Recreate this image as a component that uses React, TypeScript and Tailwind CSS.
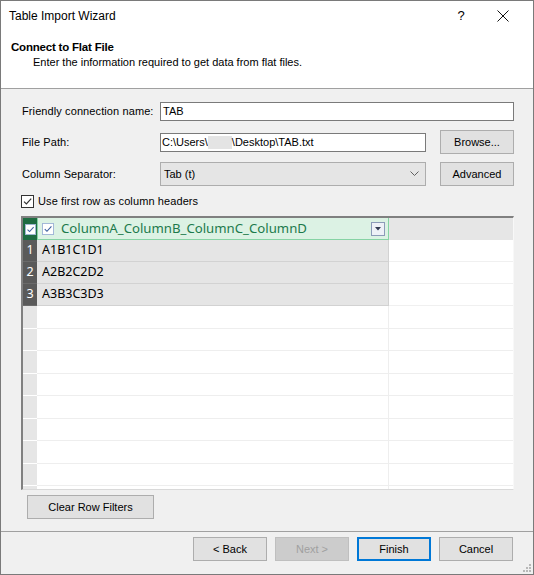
import React from 'react';

const ui = { fontFamily: '"Liberation Sans", Arial, sans-serif' };
const grid = { fontFamily: '"Noto Sans", "Open Sans", sans-serif' };

function Btn({ label, w = 'w-[74px]', disabled = false, focused = false }: { label: string; w?: string; disabled?: boolean; focused?: boolean }) {
  let cls = 'border-[#adadad] bg-[#e1e1e1] text-black';
  if (disabled) cls = 'border-[#bfbfbf] bg-[#cccccc] text-[#a0a0a0]';
  if (focused) cls = 'border-2 border-[#0078d7] bg-[#e1e1e1] text-black';
  return (
    <div className={`${w} h-[24px] border flex items-center justify-center text-[11px] ${cls}`}>
      {label}
    </div>
  );
}

function Check({ size = 13, tone = 'dark' }: { size?: number; tone?: 'dark' | 'blue' }) {
  const stroke = tone === 'dark' ? '#333333' : '#3c5f9e';
  const border = tone === 'dark' ? '#333333' : '#9eb4d6';
  return (
    <svg width={size} height={size} viewBox="0 0 13 13">
      <rect x="0.5" y="0.5" width="12" height="12" fill="#ffffff" stroke={border} />
      <path d="M3 6.6 L5.4 9 L10.2 3.6" fill="none" stroke={stroke} strokeWidth="1.2" />
    </svg>
  );
}

const dataRows = ['A1B1C1D1', 'A2B2C2D2', 'A3B3C3D3'];

export default function App() {
  return (
    <div style={ui} className="w-[534px] h-[575px] border border-[#7a7a7a] flex flex-col bg-[#f0f0f0] text-black overflow-hidden">
      {/* title + header */}
      <div className="bg-white h-[87px] flex flex-col">
        <div className="h-[30px] flex items-center pl-[8px]">
          <span className="text-[12px] flex-1">Table Import Wizard</span>
          <span className="text-[13px] w-[20px] text-center mr-[26px]">?</span>
          <svg width="12" height="12" viewBox="0 0 12 12" className="mr-[24px]">
            <path d="M0.5 0.5 L11.5 11.5 M11.5 0.5 L0.5 11.5" stroke="#111" strokeWidth="1" />
          </svg>
        </div>
        <div className="pl-[10px] pt-[9px] text-[11.5px] font-bold tracking-[-0.2px] leading-[14px]">Connect to Flat File</div>
        <div className="pl-[32px] text-[11px] leading-[16px]">Enter the information required to get data from flat files.</div>
      </div>
      <div className="h-px bg-[#a0a0a0]" />

      {/* body */}
      <div className="flex-1 flex flex-col px-[19px] pt-[13px]">
        <div className="flex items-center h-[19px]">
          <span className="w-[140px] pl-[2px] text-[11px] tracking-[0.1px]">Friendly connection name:</span>
          <div className="flex-1 h-[19px] bg-white border border-[#7a7a7a] flex items-center pl-[2px] text-[11px]">TAB</div>
        </div>

        <div className="flex items-center h-[24px] mt-[9px]">
          <span className="w-[140px] pl-[2px] text-[11px] tracking-[0.1px]">File Path:</span>
          <div className="w-[266px] h-[19px] bg-white border border-[#7a7a7a] flex items-center pl-[1px] text-[11px]">
            C:\Users\<span className="inline-block w-[24px] h-[13px] bg-[#e4e4e4]" />\Desktop\TAB.txt
          </div>
          <div className="ml-auto">
            <Btn label="Browse..." />
          </div>
        </div>

        <div className="flex items-center h-[24px] mt-[8px]">
          <span className="w-[140px] pl-[2px] text-[11px] tracking-[0.1px]">Column Separator:</span>
          <div className="w-[266px] h-[24px] bg-[#e5e5e5] border border-[#adadad] flex items-center pl-[3px] text-[11px]">
            <span className="flex-1">Tab (t)</span>
            <svg width="9" height="6" viewBox="0 0 9 6" className="mr-[6px]">
              <path d="M0.5 0.5 L4.5 4.5 L8.5 0.5" fill="none" stroke="#606060" />
            </svg>
          </div>
          <div className="ml-auto">
            <Btn label="Advanced" />
          </div>
        </div>

        <div className="flex items-center h-[13px] mt-[9px] pl-[1px]">
          <Check />
          <span className="ml-[4px] text-[11px] tracking-[0.1px]">Use first row as column headers</span>
        </div>

        {/* grid */}
        <div className="mt-[8px] h-[274px] ml-[1px] border-t-2 border-l-2 border-t-[#808080] border-l-[#808080] border-r border-b border-r-[#f8f8f8] border-b-[#d9d9d9] bg-white flex flex-col overflow-hidden" style={grid}>
          <div className="flex h-[22px] shrink-0">
            <div className="w-[14px] bg-[#1e6b41] flex items-center justify-center">
              <Check size={11} tone="blue" />
            </div>
            <div className="w-[352px] bg-[#dcf2e4] border border-[#86d3a4] border-t-0 flex items-center pl-[4px]">
              <Check size={12} tone="blue" />
              <span className="ml-[7px] text-[13.2px] text-[#1d7a4c] leading-none">ColumnA_ColumnB_ColumnC_ColumnD</span>
              <div className="ml-auto mr-[3px] w-[14px] h-[14px] border border-[#8c9bb8] bg-[#eef1f7] flex items-center justify-center">
                <svg width="6" height="4" viewBox="0 0 6 4"><path d="M0 0 L6 0 L3 3.5 Z" fill="#333b52" /></svg>
              </div>
            </div>
            <div className="flex-1 bg-[#e6e6e6]" />
          </div>
          {dataRows.map((r, i) => (
            <div key={r} className="flex h-[22px] shrink-0">
              <div className="w-[14px] bg-[#5a5a5a] text-white text-[12.5px] flex items-center justify-center border-b border-[#6a6a6a]">{i + 1}</div>
              <div className="w-[352px] bg-[#e5e5e5] border-b border-r border-[#d2d2d2] flex items-center pl-[5px] text-[12.5px]">{r}</div>
              <div className="flex-1 bg-white border-b border-[#f0f0f0]" />
            </div>
          ))}
          {Array.from({ length: 9 }).map((_, i) => (
            <div key={i} className="flex h-[22.5px] shrink-0">
              <div className="w-[14px] bg-[#e6e6e6] border-b border-white" />
              <div className="w-[352px] bg-white border-b border-r border-[#eeeeee]" />
              <div className="flex-1 bg-white border-b border-[#eeeeee]" />
            </div>
          ))}
        </div>

        <div className="mt-[5px] ml-[7px]">
          <Btn label="Clear Row Filters" w="w-[127px]" />
        </div>
      </div>

      {/* footer */}
      <div className="h-px bg-[#a0a0a0] mt-[11px]" />
      <div className="h-[42px] flex items-start pt-[5px] pr-[20px] justify-end gap-[8px] relative">
        <Btn label="< Back" />
        <Btn label="Next >" disabled />
        <Btn label="Finish" focused />
        <Btn label="Cancel" />
        <svg width="10" height="10" viewBox="0 0 10 10" className="absolute right-[2px] bottom-[2px]">
          {[[8, 2], [8, 5], [5, 5], [8, 8], [5, 8], [2, 8]].map(([x, y], k) => (
            <rect key={k} x={x} y={y} width="2" height="2" fill="#b8b8b8" />
          ))}
        </svg>
      </div>
    </div>
  );
}
